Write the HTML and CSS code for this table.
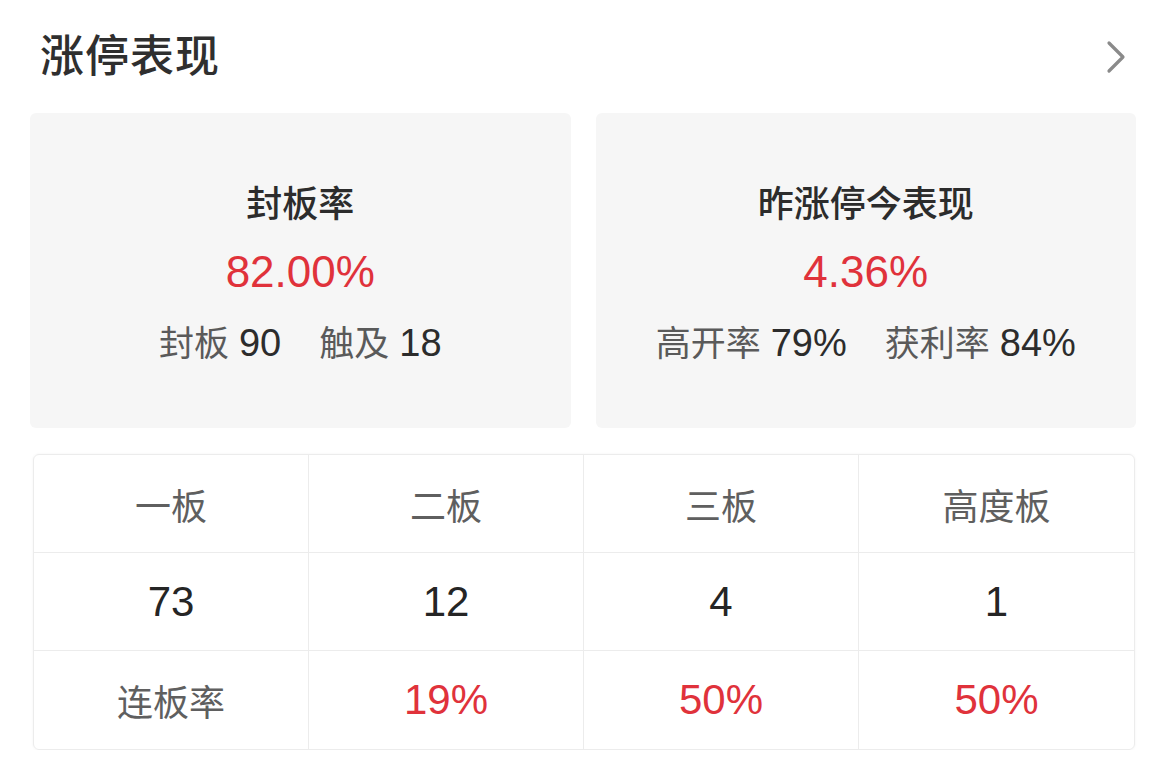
FILE: index.html
```html
<!DOCTYPE html>
<html lang="zh-CN">
<head>
<meta charset="utf-8">
<title>涨停表现</title>
<link rel="stylesheet" href="styles.css">
</head>
<body>
<div class="page">
  <header class="head">
    <h1 class="title">涨停表现</h1>
    <svg class="chev" width="24" height="34" viewBox="0 0 24 34" aria-hidden="true">
      <path d="M5 3 L19 17 L5 31" fill="none" stroke="#8a8a8a" stroke-width="3.2" stroke-linecap="round" stroke-linejoin="round"/>
    </svg>
  </header>

  <section class="cards">
    <div class="card">
      <div class="card-title">封板率</div>
      <div class="card-value">82.00%</div>
      <div class="card-sub">
        <span class="pair"><span class="lbl">封板</span><span class="num">90</span></span>
        <span class="pair"><span class="lbl">触及</span><span class="num">18</span></span>
      </div>
    </div>
    <div class="card">
      <div class="card-title">昨涨停今表现</div>
      <div class="card-value">4.36%</div>
      <div class="card-sub">
        <span class="pair"><span class="lbl">高开率</span><span class="num">79%</span></span>
        <span class="pair"><span class="lbl">获利率</span><span class="num">84%</span></span>
      </div>
    </div>
  </section>

  <section class="table">
    <div class="cell hd">一板</div>
    <div class="cell hd">二板</div>
    <div class="cell hd">三板</div>
    <div class="cell hd">高度板</div>

    <div class="cell val">73</div>
    <div class="cell val">12</div>
    <div class="cell val">4</div>
    <div class="cell val">1</div>

    <div class="cell hd last">连板率</div>
    <div class="cell red last">19%</div>
    <div class="cell red last">50%</div>
    <div class="cell red last">50%</div>
  </section>
</div>
</body>
</html>
```

FILE: styles.css
```css
* { box-sizing: border-box; }

html, body {
  margin: 0;
  padding: 0;
  background: #ffffff;
}

body {
  font-family: "Liberation Sans", "Noto Sans CJK SC", sans-serif;
  color: #333333;
}

.page {
  width: 1159px;
  padding: 0 23px 0 30px;
}

.head {
  height: 113px;
  display: flex;
  align-items: center;
  justify-content: space-between;
  padding: 0 8px 0 10px;
}

.title {
  margin: 0;
  font-size: 44px;
  line-height: 44px;
  font-weight: 500;
  color: #2f2f2f;
  letter-spacing: 1px;
}

.chev {
  display: block;
}

.cards {
  display: grid;
  grid-template-columns: 1fr 1fr;
  column-gap: 25px;
}

.card {
  height: 315px;
  background: #f6f6f6;
  border-radius: 6px;
  display: flex;
  flex-direction: column;
  align-items: center;
  padding-top: 72px;
}

.card-title {
  font-size: 36px;
  line-height: 40px;
  font-weight: 500;
  color: #2c2c2c;
}

.card-value {
  margin-top: 27px;
  font-size: 44px;
  line-height: 40px;
  color: #e0323b;
}

.card-sub {
  margin-top: 31px;
  line-height: 40px;
  display: flex;
  align-items: baseline;
  gap: 38px;
}

.pair {
  display: flex;
  align-items: baseline;
  gap: 10px;
}

.lbl {
  font-size: 35px;
  color: #5a5a5a;
}

.num {
  font-size: 38px;
  color: #2c2c2c;
}

.table {
  margin: 26px 1px 0 3px;
  display: grid;
  grid-template-columns: repeat(4, 1fr);
  border: 1px solid #ececec;
  border-radius: 6px;
  box-shadow: 0 0 3px rgba(0, 0, 0, 0.05);
  overflow: hidden;
}

.cell {
  height: 98px;
  display: flex;
  align-items: center;
  justify-content: center;
  border-right: 1px solid #ececec;
  border-bottom: 1px solid #ececec;
}

.cell:nth-child(4n) { border-right: none; }
.cell.last { border-bottom: none; }

.hd {
  font-size: 36px;
  color: #5f5f5f;
}

.val {
  font-size: 42px;
  color: #252525;
}

.red {
  font-size: 42px;
  color: #e0323b;
}
```
